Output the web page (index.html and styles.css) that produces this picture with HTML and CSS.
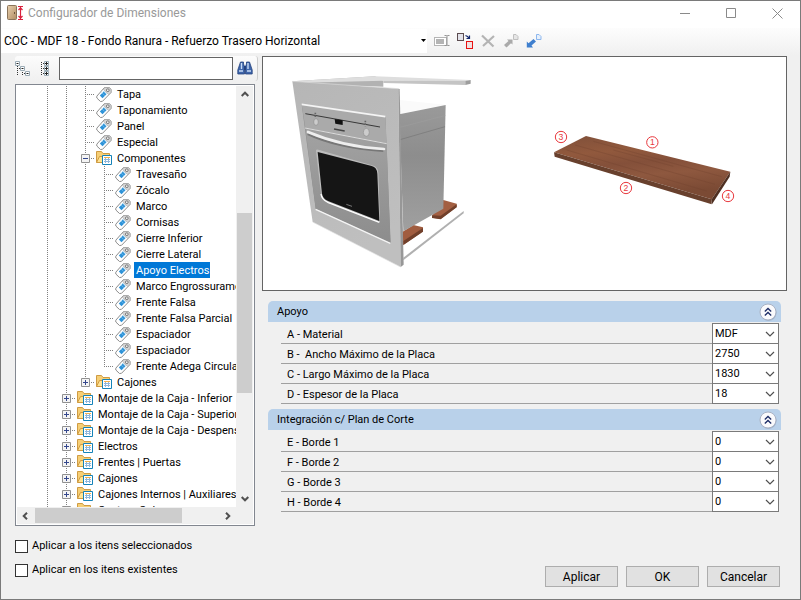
FILE: index.html
```
<!DOCTYPE html>
<html lang="es">
<head>
<meta charset="utf-8">
<title>Configurador de Dimensiones</title>
<link rel="stylesheet" href="styles.css">
</head>
<body>
<svg class="sprite" aria-hidden="true">
  <symbol id="tag" viewBox="0 0 16 16">
    <path d="M8.500 1.500H13L15 3.200V6.500L6.500 15.300L4.500 15.500L.8 12L.8 10.200Z" fill="#fff" stroke="#8c8c8c"/>
    <path d="M9 1.500H13L15 3.200V6.500L12.500 8.500L7.500 3.500Z" fill="#d5d5d5" stroke="#a8a8a8" stroke-width=".6"/>
    <path d="M7.800 5.500L10.500 8.200L6.500 12.200L3.800 9.500Z" fill="#2e93d8"/>
    <path d="M7.500 5L10.500 8M5.800 6.700L8.800 9.700" stroke="#7fc0ea" stroke-width=".7"/>
    <circle cx="11.800" cy="4.200" r="1.400" fill="#eee" stroke="#777"/>
  </symbol>
  <symbol id="folder" viewBox="0 0 16 16">
    <path d="M.5 12.500V1.500H5.500L7 3.500H13.500V7" fill="#f6cf76" stroke="#cf9b43"/>
    <path d="M.5 12.500L3.500 6.500H15L13 12.500Z" fill="#ffe394" stroke="#cf9b43"/>
    <path d="M6.500 5.500H15.500V14.500H6.500Z" fill="#fff" stroke="#1583b8"/>
    <path d="M8 7.500H14" stroke="#f3b24d"/>
    <path d="M8 9.500H14M8 11.500H14M9.500 8V13M12.500 8V13" stroke="#8fb7dc" fill="none"/>
  </symbol>
  <symbol id="plus" viewBox="0 0 9 9">
    <path d="M.5 .5H8.500V8.500H.5Z" fill="#f4f4f4" stroke="#919191"/>
    <path d="M2 4.500H7M4.500 2V7" stroke="#34478c"/>
  </symbol>
  <symbol id="minus" viewBox="0 0 9 9">
    <path d="M.5 .5H8.500V8.500H.5Z" fill="#f4f4f4" stroke="#919191"/>
    <path d="M2 4.500H7" stroke="#34478c"/>
  </symbol>
  <symbol id="chev" viewBox="0 0 10 6"><path d="M1 1L5 5L9 1" fill="none" stroke="#505050" stroke-width="1.200"/></symbol>
  <symbol id="arrow" viewBox="0 0 8 6"><path d="M.7 5L4 1.700L7.300 5" fill="none" stroke="#505050" stroke-width="2"/></symbol>
  <symbol id="collapse" viewBox="0 0 18 18">
    <circle cx="9.500" cy="9.800" r="8" fill="#8b9ab3" opacity=".6"/>
    <circle cx="9" cy="9" r="8" fill="#fafafc" stroke="#a9b2c4"/>
    <path d="M5.800 8.500L9 5.500L12.200 8.500M5.800 12.500L9 9.500L12.200 12.500" fill="none" stroke="#1c2c66" stroke-width="1.300"/>
  </symbol>
</svg>

<div class="window">
  <header class="titlebar">
    <svg class="app-icon" viewBox="0 0 17 16" aria-hidden="true">
      <defs><linearGradient id="door" x2="1" y2="1"><stop offset="0" stop-color="#e8d0ae"/><stop offset="1" stop-color="#b08c62"/></linearGradient></defs>
      <rect x=".5" y=".5" width="9" height="14" rx="1" fill="url(#door)" stroke="#8a7359"/>
      <path d="M7.500 7V9" stroke="#6b543c"/>
      <path d="M11 1.500H16M11 14.500H16M13.500 2V14M11.500 5L13.500 2.800L15.500 5M11.500 11L13.500 13.200L15.500 11" fill="none" stroke="#d9203c" stroke-width="1.200"/>
    </svg>
    <h1>Configurador de Dimensiones</h1>
    <div class="caption">
      <button type="button" aria-label="Minimizar"><svg viewBox="0 0 11 11"><path d="M0 5.500H10" stroke="#8a8a8a"/></svg></button>
      <button type="button" aria-label="Maximizar"><svg viewBox="0 0 11 11"><path d="M.5 .5H9.500V9.500H.5Z" fill="none" stroke="#8a8a8a"/></svg></button>
      <button type="button" aria-label="Cerrar"><svg viewBox="0 0 11 11"><path d="M.5 .5L10.500 10.500M10.500 .5L.5 10.500" stroke="#8a8a8a"/></svg></button>
    </div>
  </header>

  <div class="toolbar">
    <div class="preset">
      <select aria-label="Configuración"><option>COC - MDF 18 - Fondo Ranura - Refuerzo Trasero Horizontal</option></select>
      <svg viewBox="0 0 5 3" aria-hidden="true"><path d="M0 0H5L2.500 3Z"/></svg>
    </div>
    <button type="button" aria-label="Renombrar"><svg viewBox="0 0 16 16">
      <rect x=".5" y="4.500" width="12" height="8" fill="#fff" stroke="#b5b5b5"/><rect x="2" y="6" width="8" height="5" fill="#b4b4b4"/>
      <path d="M10.500 2.500H12.500L13 3L13.500 2.500H15.500M13 3V12M10.500 12.500H12.500L13 12L13.500 12.500H15.500" fill="none" stroke="#959595"/></svg></button>
    <button type="button" aria-label="Duplicar"><svg viewBox="0 0 16 16">
      <rect x=".5" y=".5" width="6" height="7" fill="#e3e3ea" stroke="#5c4c50"/><rect x="9.500" y="8.500" width="6" height="7" fill="#f0e2e2" stroke="#e81111"/>
      <path d="M8.500 2.500L10.500 3.500L12 5M12.500 2.500V5.500H9.500" fill="none" stroke="#14286e" stroke-width="1.200"/></svg></button>
    <button type="button" aria-label="Eliminar"><svg viewBox="0 0 16 16"><path d="M2 2.500L13.500 13.500M14 3L3 13" stroke="#b4b4b4" stroke-width="2.200"/></svg></button>
    <button type="button" aria-label="Exportar"><svg viewBox="0 0 16 16">
      <path d="M1 12L5.500 8L4 6.500H9.500V11.500L8 10.200L3.500 14.500Z" fill="#aaa"/><path d="M10.500 1.500H13L15 3.500V6.500H10.500Z" fill="#e6e6e6" stroke="#c0c0c0"/></svg></button>
    <button type="button" aria-label="Importar"><svg viewBox="0 0 16 16">
      <path d="M7.500 6L10 8.500L5.500 12.500L7 14.500H.8V8.500L2.500 10.200Z" fill="#3f7fce"/><path d="M10.500 1.500H13L15 3.500V6.500H10.500Z" fill="#e6f0fc" stroke="#8db7ee"/></svg></button>
  </div>

  <main>
    <section class="browser">
      <div class="search">
        <button type="button" aria-label="Contraer todo"><svg viewBox="0 0 16 16">
          <path d="M2.500 5V15M7.500 9V15M4 7.500H6M9 12.500H11" stroke="#333" stroke-dasharray="1 1"/>
          <path d="M.5 .5H4.500V4.500H.5ZM5.500 5.500H9.500V9.500H5.500ZM10.500 10.500H14.500V14.500H10.500Z" fill="#fff" stroke="#9aabb5"/>
          <path d="M1.500 2.500H3.500M6.500 7.500H8.500M11.500 12.500H13.500" stroke="#222"/></svg></button>
        <button type="button" aria-label="Expandir todo"><svg viewBox="0 0 16 16">
          <path d="M4.500 1V15M6 2.500H8M6 7.500H8M6 12.500H8" stroke="#333" stroke-dasharray="1 1"/>
          <path d="M7.500 .5H11.500V4.500H7.500ZM7.500 5.500H11.500V9.500H7.500ZM7.500 10.500H11.500V14.500H7.500Z" fill="#fff" stroke="#9aabb5"/>
          <path d="M8 2.500H11M8 7.500H11M8 12.500H11M9.500 1V4M9.500 6V9M9.500 11V14" stroke="#222"/></svg></button>
        <input type="text" aria-label="Buscar">
        <button type="button" class="find" aria-label="Buscar siguiente"><svg viewBox="0 0 16 16">
          <path d="M3.500 1H6.500V3L7.500 5.500V13H.8V9ZM9.500 1H12.500L15.200 9V13H8.500V5.500L9.500 3Z" fill="#3f66ab" stroke="#24427e" stroke-width=".8"/>
          <path d="M2 10H6M10 10H14M4.500 2V8M11 2V8" stroke="#c9dcf6" stroke-width="1.400"/><path d="M7 5H9V9H7Z" fill="#24427e"/></svg></button>
      </div>

      <div class="tree">
        <ul>
          <li><i></i><i></i><i class="leaf"></i><svg><use href="#tag"/></svg><span>Tapa</span></li>
          <li><i></i><i></i><i class="leaf"></i><svg><use href="#tag"/></svg><span>Taponamiento</span></li>
          <li><i></i><i></i><i class="leaf"></i><svg><use href="#tag"/></svg><span>Panel</span></li>
          <li><i></i><i></i><i class="leaf"></i><svg><use href="#tag"/></svg><span>Especial</span></li>
          <li><i></i><i></i><i class="leaf"><svg><use href="#minus"/></svg></i><svg><use href="#folder"/></svg><span>Componentes</span></li>
          <li><i></i><i></i><i></i><i class="leaf"></i><svg><use href="#tag"/></svg><span>Travesaño</span></li>
          <li><i></i><i></i><i></i><i class="leaf"></i><svg><use href="#tag"/></svg><span>Zócalo</span></li>
          <li><i></i><i></i><i></i><i class="leaf"></i><svg><use href="#tag"/></svg><span>Marco</span></li>
          <li><i></i><i></i><i></i><i class="leaf"></i><svg><use href="#tag"/></svg><span>Cornisas</span></li>
          <li><i></i><i></i><i></i><i class="leaf"></i><svg><use href="#tag"/></svg><span>Cierre Inferior</span></li>
          <li><i></i><i></i><i></i><i class="leaf"></i><svg><use href="#tag"/></svg><span>Cierre Lateral</span></li>
          <li><i></i><i></i><i></i><i class="leaf"></i><svg><use href="#tag"/></svg><span class="selected">Apoyo Electros</span></li>
          <li><i></i><i></i><i></i><i class="leaf"></i><svg><use href="#tag"/></svg><span>Marco Engrossurame</span></li>
          <li><i></i><i></i><i></i><i class="leaf"></i><svg><use href="#tag"/></svg><span>Frente Falsa</span></li>
          <li><i></i><i></i><i></i><i class="leaf"></i><svg><use href="#tag"/></svg><span>Frente Falsa Parcial</span></li>
          <li><i></i><i></i><i></i><i class="leaf"></i><svg><use href="#tag"/></svg><span>Espaciador</span></li>
          <li><i></i><i></i><i></i><i class="leaf"></i><svg><use href="#tag"/></svg><span>Espaciador</span></li>
          <li><i></i><i></i><i></i><i class="leaf last"></i><svg><use href="#tag"/></svg><span>Frente Adega Circular</span></li>
          <li><i></i><i></i><i class="leaf last"><svg><use href="#plus"/></svg></i><svg><use href="#folder"/></svg><span>Cajones</span></li>
          <li><i></i><i class="leaf"><svg><use href="#plus"/></svg></i><svg><use href="#folder"/></svg><span>Montaje de la Caja - Inferior</span></li>
          <li><i></i><i class="leaf"><svg><use href="#plus"/></svg></i><svg><use href="#folder"/></svg><span>Montaje de la Caja - Superior</span></li>
          <li><i></i><i class="leaf"><svg><use href="#plus"/></svg></i><svg><use href="#folder"/></svg><span>Montaje de la Caja - Despens</span></li>
          <li><i></i><i class="leaf"><svg><use href="#plus"/></svg></i><svg><use href="#folder"/></svg><span>Electros</span></li>
          <li><i></i><i class="leaf"><svg><use href="#plus"/></svg></i><svg><use href="#folder"/></svg><span>Frentes | Puertas</span></li>
          <li><i></i><i class="leaf"><svg><use href="#plus"/></svg></i><svg><use href="#folder"/></svg><span>Cajones</span></li>
          <li><i></i><i class="leaf"><svg><use href="#plus"/></svg></i><svg><use href="#folder"/></svg><span>Cajones Internos | Auxiliares</span></li>
          <li><i></i><i class="leaf"><svg><use href="#plus"/></svg></i><svg><use href="#folder"/></svg><span>Costura Cola</span></li>
        </ul>
        <div class="vbar"><svg><use href="#arrow"/></svg><b></b><svg class="down"><use href="#arrow"/></svg></div>
        <div class="hbar"><svg class="left"><use href="#arrow"/></svg><b></b><svg class="right"><use href="#arrow"/></svg></div>
        <div class="corner"></div>
      </div>
    </section>

    <section class="details">
      <div class="preview">
        <svg class="oven" viewBox="0 0 600 645" role="img" aria-label="Horno">
          <defs>
            <linearGradient id="side" x2="0" y2="1"><stop offset="0" stop-color="#9a9a9a"/><stop offset=".4" stop-color="#8d8d8d"/><stop offset="1" stop-color="#a0a0a0"/></linearGradient>
            <linearGradient id="front" x2=".4" y2="1"><stop offset="0" stop-color="#b6b6b6"/><stop offset="1" stop-color="#bfbfbf"/></linearGradient>
            <linearGradient id="door2" x2="0" y2="1"><stop offset="0" stop-color="#a2a2a2"/><stop offset="1" stop-color="#8d8d8d"/></linearGradient>
          </defs>
          <path d="M37 64L285 49L310 62V80L180 76Z" fill="#b2b2b2"/>
          <path d="M37 64L285 49L572 60L556 64L310 62L60 68Z" fill="#dedede"/>
          <path d="M310 62L556 63V75L310 69Z" fill="#c4c4c4"/><path d="M556 63L572 60V71L556 75Z" fill="#9d9d9d"/>
          <path d="M358 120L497 134L360 162Z" fill="#fafafa"/>
          <path d="M456 467L490 420L530 431V441L482 477L456 473Z" fill="#a35f42"/><path d="M482 467L530 433V442L482 478L456 474V466Z" fill="#71402b"/>
          <path d="M366 540L368 515L400 495L429 502V514L370 555Z" fill="#a15d40"/><path d="M370 543L429 504V515L370 555Z" fill="#71402b"/>
          <path d="M358 163L497 135L490 446L370 514Z" fill="url(#side)"/>
          <path d="M360 239L495 200" stroke="#767676" stroke-width="2"/><path d="M360 202L497 166" stroke="#a5a5a5"/>
          <path d="M370 593L551 453V460L370 601Z" fill="#b0b0b0"/>
          <path d="M37 64L355 86L362 621L98 486Z" fill="url(#front)"/>
          <path d="M37 64L355 86" stroke="#d8d8d8" stroke-width="2"/>
          <path d="M355 86L359 87L371 614L362 621Z" fill="#979797"/><path d="M98 486L362 621" stroke="#e0e0e0" stroke-width="2"/>
          <path d="M65 133L316 170L332 550L107 447Z" fill="#8c8c8c"/>
          <path d="M65 133L316 170L320 250L76 203Z" fill="#aaa"/><path d="M65 133L316 170" stroke="#f4f4f4" stroke-width="5"/>
          <path d="M76 205L320 251L331 546L107 445Z" fill="url(#door2)"/><path d="M75 204L320 251" stroke="#ddd" stroke-width="3"/>
          <path d="M107 448L331 550" stroke="#f5f5f5" stroke-width="4"/>
          <path d="M76 161L300 201" stroke="#383838" stroke-width="3"/>
          <path d="M164 177L188 181V195L166 191Z" fill="#111"/><path d="M162 207L194 213" stroke="#444" stroke-width="4"/>
          <path d="M106 158V172M256 182V199" stroke="#666" stroke-width="5" stroke-dasharray="5 3"/>
          <ellipse cx="108" cy="186" rx="7" ry="10" fill="#ccc" stroke="#8e8e8e" stroke-width="2"/><ellipse cx="259" cy="217" rx="9" ry="12" fill="#ccc" stroke="#8e8e8e" stroke-width="2"/>
          <path d="M83 222C145 252 232 267 310 273" fill="none" stroke="#777" stroke-width="6"/>
          <path d="M84 216C150 244 235 263 312 267" fill="none" stroke="#eee" stroke-width="8" stroke-linecap="round"/>
          <path d="M108 272Q108 267 115 269L276 316Q295 321 295 339L300 486L145 428Q124 420 123 403Z" fill="#bdbdbd"/>
          <path d="M113 276L275 318Q291 322 292 341L298 483L146 424Q128 417 126 401Z" fill="#151515"/>
          <path d="M123 402Q125 419 145 428L298 487" fill="none" stroke="#fff" stroke-width="4"/><path d="M199 433L216 439" stroke="#777" stroke-width="3"/>
        </svg>
        <svg class="board" viewBox="0 0 630 300" role="img" aria-label="Placa con bordes 1 a 4">
          <defs><linearGradient id="wood" x2=".25" y2="1"><stop offset="0" stop-color="#80503a"/><stop offset=".3" stop-color="#91593d"/><stop offset=".5" stop-color="#84503a"/><stop offset=".7" stop-color="#8e583f"/><stop offset="1" stop-color="#7b4a34"/></linearGradient></defs>
          <path d="M42 97L138 48L571 155L515 238Z" fill="url(#wood)"/>
          <path d="M42 97L515 238V253L44 110Z" fill="#68402d"/><path d="M515 238L571 155L569 170L516 253Z" fill="#4f2f21"/>
          <path d="M105 75L525 193M80 90L500 213M160 64L545 170M220 90L400 139" stroke="#71432f" stroke-width="2" opacity=".5"/>
          <g class="marks"><circle cx="63" cy="51" r="17"/><circle cx="337" cy="67" r="17"/><circle cx="258" cy="204" r="17"/><circle cx="564" cy="228" r="17"/>
          <text x="63" y="60">3</text><text x="337" y="76">1</text><text x="258" y="213">2</text><text x="564" y="237">4</text></g>
        </svg>
      </div>

      <section class="group">
        <h2>Apoyo <button type="button" aria-label="Contraer Apoyo"><svg><use href="#collapse"/></svg></button></h2>
        <div class="rows">
          <div class="row"><label for="a">A - Material</label><div class="field"><select id="a"><option>MDF</option></select><svg><use href="#chev"/></svg></div></div>
          <div class="row"><label for="b">B -&nbsp; Ancho Máximo de la Placa</label><div class="field"><select id="b"><option>2750</option></select><svg><use href="#chev"/></svg></div></div>
          <div class="row"><label for="c">C - Largo Máximo de la Placa</label><div class="field"><select id="c"><option>1830</option></select><svg><use href="#chev"/></svg></div></div>
          <div class="row"><label for="d">D - Espesor de la Placa</label><div class="field"><select id="d"><option>18</option></select><svg><use href="#chev"/></svg></div></div>
        </div>
      </section>
      <section class="group">
        <h2>Integración c/ Plan de Corte <button type="button" aria-label="Contraer Integración"><svg><use href="#collapse"/></svg></button></h2>
        <div class="rows">
          <div class="row"><label for="e">E - Borde 1</label><div class="field"><select id="e"><option>0</option></select><svg><use href="#chev"/></svg></div></div>
          <div class="row"><label for="f">F - Borde 2</label><div class="field"><select id="f"><option>0</option></select><svg><use href="#chev"/></svg></div></div>
          <div class="row"><label for="g">G - Borde 3</label><div class="field"><select id="g"><option>0</option></select><svg><use href="#chev"/></svg></div></div>
          <div class="row"><label for="h">H - Borde 4</label><div class="field"><select id="h"><option>0</option></select><svg><use href="#chev"/></svg></div></div>
        </div>
      </section>
    </section>
  </main>

  <footer>
    <div class="checks">
      <label><input type="checkbox">Aplicar a los itens seleccionados</label>
      <label><input type="checkbox">Aplicar en los itens existentes</label>
    </div>
    <div class="actions">
      <button type="button">Aplicar</button>
      <button type="button">OK</button>
      <button type="button">Cancelar</button>
    </div>
  </footer>
</div>
</body>
</html>
```
FILE: styles.css
```
* { box-sizing: border-box; }
body { margin: 0; font: 11px/16px Roboto, "Liberation Sans", sans-serif; color: #000; }
button, select, input { font: inherit; color: inherit; margin: 0; padding: 0; }
button { border: 0; background: none; }
h1, h2 { margin: 0; font-weight: normal; }
ul { margin: 0; padding: 0; list-style: none; }
svg { display: block; flex: none; }
.sprite { position: absolute; width: 0; height: 0; }

.window { min-height: 100vh; display: flex; flex-direction: column; border: 1px solid #7a7a7a; background: #f0f0f0; }

.titlebar { display: flex; align-items: center; height: 27px; padding: 0 17px 3px 6px; background: #fff; }
.app-icon { width: 17px; height: 16px; }
.titlebar h1 { flex: 1; margin-left: 4px; font-size: 12px; color: #999; }
.caption { display: flex; gap: 35px; }
.caption button { width: 11px; height: 11px; }
.caption svg { width: 11px; height: 11px; }

.toolbar { display: flex; align-items: center; gap: 7px; height: 27px; padding: 0 8px 2px 0; background: linear-gradient(#fdfdfd, #f0f0f0); }
.preset { display: grid; align-items: center; width: 426px; height: 24px; background: #fff; }
.preset select { grid-area: 1 / 1; width: 100%; padding-left: 3px; border: 0; background: none; appearance: none; font-size: 12px; }
.preset svg { grid-area: 1 / 1; justify-self: end; width: 5px; height: 3px; margin-right: 1px; }
.toolbar button, .toolbar button svg { width: 16px; height: 16px; }

main { display: flex; gap: 7px; padding: 1px 13px 0 14px; }
.browser { flex: none; display: flex; flex-direction: column; width: 240px; }
.search { display: flex; align-items: center; height: 25px; margin-right: -3px; margin-bottom: 3px; border-radius: 3px; background: linear-gradient(#fcfcfc, #f0f0f0); border-right: 1px solid #ccc; }
.search button { flex: none; width: 22px; }
.search button svg { width: 16px; height: 16px; }
.search input { flex: 1; min-width: 0; height: 23px; border: 1px solid #646464; background: #fff; }
.search .find { width: 24px; padding-left: 4px; }

.tree { display: grid; grid-template: minmax(0, 1fr) 17px / minmax(0, 1fr) 17px; height: 442px; padding: 1px; border: 1px solid #828790; background: #fff; }
.tree ul { overflow: hidden; padding-left: 21px; }
.tree li { display: flex; height: 16px; white-space: nowrap; }
.tree li > svg { width: 16px; height: 16px; margin-left: 1px; }
.tree span { margin-left: 3px; padding: 1px 1px 0 2px; }
.tree .selected { background: #0078d7; color: #fff; }
.tree i { flex: none; width: 19px; padding: 4px 0 0 5px; background: repeating-linear-gradient(#808080 0 1px, transparent 1px 2px) 9px 0 / 1px 100% no-repeat; }
.tree .leaf { background: repeating-linear-gradient(#808080 0 1px, transparent 1px 2px) 9px 0 / 1px 100% no-repeat, repeating-linear-gradient(90deg, #808080 0 1px, transparent 1px 2px) 9px 8px / 10px 1px no-repeat; }
.tree .last { background-size: 1px 9px, 10px 1px; }
.tree i svg { width: 9px; height: 9px; }
.vbar, .hbar { display: flex; align-items: center; justify-content: space-between; background: #f0f0f0; }
.vbar { flex-direction: column; padding: 5px 0; }
.hbar { padding: 0 4px; }
.corner { background: #f0f0f0; }
.vbar svg, .hbar svg { width: 8px; height: 6px; }
.vbar b { width: 15px; height: 180px; margin-top: 110px; margin-bottom: 98px; background: #cdcdcd; }
.hbar b { width: 147px; height: 15px; margin-right: 37px; background: #cdcdcd; }
.down { transform: rotate(180deg); }
.left { transform: rotate(-90deg); }
.right { transform: rotate(90deg); }

.details { flex: 1; min-width: 0; }
.preview { display: flex; gap: 60px; padding: 3px 17px; height: 235px; border: 1px solid #646464; background: #fff; }
.oven { width: 200px; height: 215px; }
.board { width: 210px; height: 100px; margin-top: 60px; }
.marks circle { fill: none; stroke: #e8383d; stroke-width: 3px; }
.marks text { fill: #e8383d; font: 26px "Liberation Sans", sans-serif; text-anchor: middle; }

.group { margin: 10px 6px 0; }
.group + .group { margin-top: 5px; }
.group h2 { display: flex; align-items: center; justify-content: space-between; height: 21px; padding: 0 4px 0 9px; border-radius: 5px 5px 0 0; background: #b9d1ea; font-size: 11px; }
.group h2 svg { width: 18px; height: 18px; }
.rows { padding: 2px 2px 0 13px; }
.row { display: flex; height: 20px; border-bottom: 1px solid #a0a0a0; }
.row label { flex: 1; padding: 3px 6px 0; }
.field { display: grid; align-items: center; width: 67px; height: 21px; margin-top: -1px; border: 1px solid #7a7a7a; background: #fff; }
.field select { grid-area: 1 / 1; width: 100%; height: 18px; padding-left: 2px; border: 0; background: none; appearance: none; font-size: 11px; }
.field svg { grid-area: 1 / 1; justify-self: end; width: 10px; height: 6px; margin-right: 3px; pointer-events: none; }

footer { flex: 1; display: flex; justify-content: space-between; padding: 12px 20px 12px 14px; }
.checks { display: flex; flex-direction: column; gap: 8px; }
.checks label { display: flex; align-items: center; gap: 4px; }
.checks input { appearance: none; width: 13px; height: 13px; border: 1px solid #333; background: #fff; }
.actions { display: flex; gap: 8px; align-self: flex-end; }
.actions button { width: 73px; height: 21px; border: 1px solid #adadad; background: #e1e1e1; font-size: 12px; }
```
